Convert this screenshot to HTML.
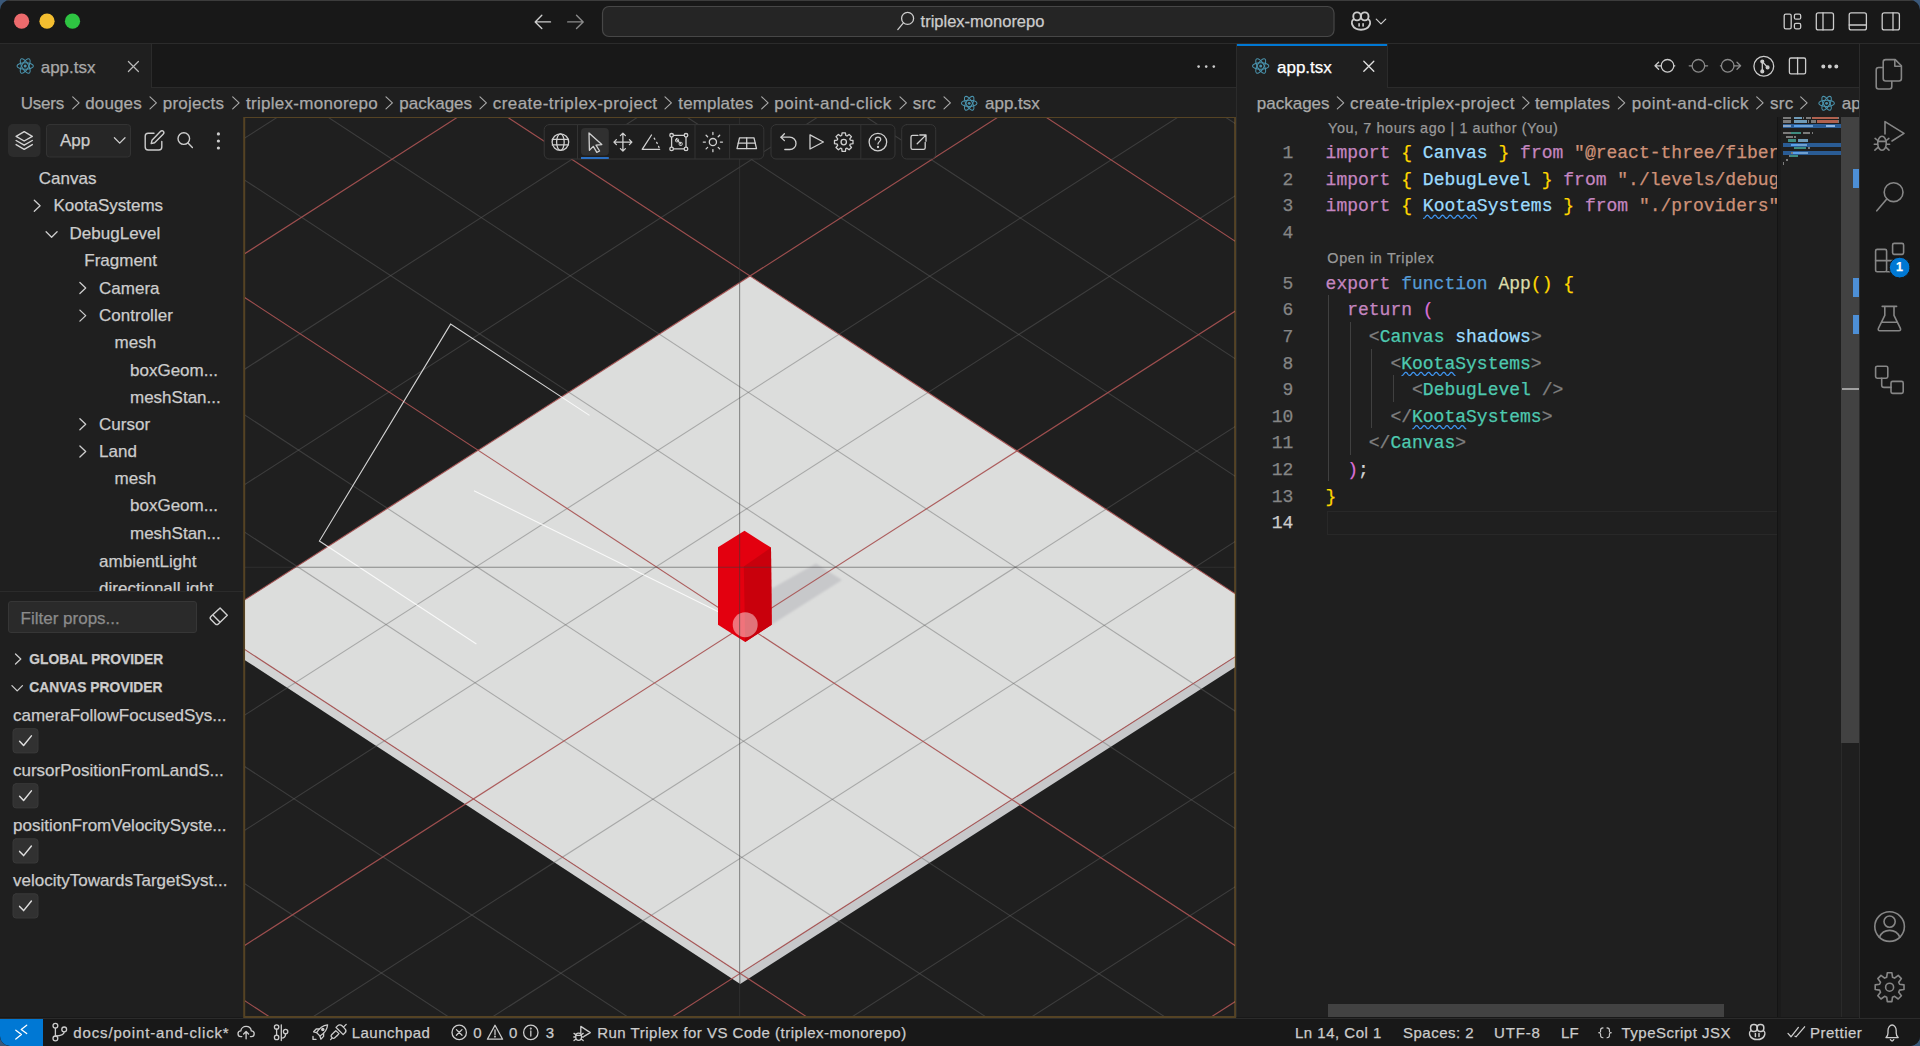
<!DOCTYPE html><html><head><meta charset="utf-8"><style>
*{box-sizing:border-box;margin:0;padding:0}
html,body{width:1920px;height:1046px;overflow:hidden;background:#3a5879}
body{font-family:"Liberation Sans",sans-serif;color:#cccccc}
.a{-webkit-text-stroke:0.25px currentColor}
#win{position:absolute;left:0;top:0;width:1920px;height:1046px;border-radius:10px;overflow:hidden;background:#181818}
.a{position:absolute;white-space:nowrap}
.t17{font-size:17px;line-height:20px}
.t16{font-size:16px;line-height:20px}
.mono{font-family:"Liberation Mono",monospace;font-size:18px;line-height:20px}
</style></head><body><div id="win"><svg width="1920" height="1046" style="position:absolute;left:0;top:0"><defs><clipPath id="vp"><rect x="245" y="118" width="990" height="898"/></clipPath><filter id="blur2" x="-20%" y="-20%" width="140%" height="140%"><feGaussianBlur stdDeviation="1.1"/></filter></defs><g clip-path="url(#vp)"><rect x="245" y="118" width="990" height="898" fill="#1f1f1f"/><polygon points="206.4,624.4 740.2,973.4 740.2,983.9 206.4,634.9" fill="#d2d3d3"/><polygon points="740.2,973.4 1283.8,625.6 1283.8,636.1 740.2,983.9" fill="#c7c8ca"/><polygon points="750.0,276.0 1283.8,625.6 740.2,973.4 206.4,624.4" fill="#dcdddc"/><polygon points="771,589 816,563.5 842,580 771,625" fill="#c7c8ca" filter="url(#blur2)"/><g stroke="rgba(100,100,100,0.43)" stroke-width="1.1"><line x1="761.5" y1="-540.7" x2="-1050.5" y2="623.0"/><line x1="761.5" y1="-540.7" x2="2540.8" y2="627.0"/><line x1="939.9" y1="-423.6" x2="-872.1" y2="739.4"/><line x1="579.8" y1="-424.0" x2="2359.1" y2="743.0"/><line x1="1029.0" y1="-365.1" x2="-783.0" y2="797.6"/><line x1="489.0" y1="-365.7" x2="2268.3" y2="801.0"/><line x1="1207.3" y1="-248.1" x2="-604.7" y2="913.9"/><line x1="307.5" y1="-249.1" x2="2086.8" y2="916.9"/><line x1="1296.3" y1="-189.7" x2="-515.7" y2="972.0"/><line x1="216.8" y1="-190.9" x2="1996.1" y2="974.8"/><line x1="1474.4" y1="-72.8" x2="-337.6" y2="1088.2"/><line x1="35.4" y1="-74.4" x2="1814.8" y2="1090.6"/><line x1="1563.4" y1="-14.4" x2="-248.6" y2="1146.3"/><line x1="-55.2" y1="-16.2" x2="1724.1" y2="1148.5"/><line x1="1741.4" y1="102.4" x2="-70.6" y2="1262.4"/><line x1="-236.4" y1="100.2" x2="1542.9" y2="1264.2"/><line x1="1830.3" y1="160.7" x2="18.3" y2="1320.4"/><line x1="-327.0" y1="158.3" x2="1452.4" y2="1322.0"/><line x1="2008.1" y1="277.4" x2="196.1" y2="1436.4"/><line x1="-508.0" y1="274.6" x2="1271.3" y2="1437.6"/><line x1="2096.9" y1="335.7" x2="284.9" y2="1494.4"/><line x1="-598.5" y1="332.7" x2="1180.8" y2="1495.4"/><line x1="2274.6" y1="452.3" x2="462.6" y2="1610.3"/><line x1="-779.4" y1="448.9" x2="999.9" y2="1610.9"/><line x1="2363.3" y1="510.5" x2="551.3" y2="1668.2"/><line x1="-869.8" y1="506.9" x2="909.5" y2="1668.6"/><line x1="2540.8" y1="627.0" x2="728.8" y2="1784.0"/><line x1="-1050.5" y1="623.0" x2="728.8" y2="1784.0"/></g><g stroke="rgba(168,82,82,0.92)" stroke-width="1.15"><line x1="850.7" y1="-482.1" x2="-961.3" y2="681.2"/><line x1="670.6" y1="-482.3" x2="2450.0" y2="685.0"/><line x1="1118.2" y1="-306.6" x2="-693.8" y2="855.7"/><line x1="398.2" y1="-307.4" x2="2177.6" y2="858.9"/><line x1="1385.4" y1="-131.2" x2="-426.6" y2="1030.1"/><line x1="126.1" y1="-132.6" x2="1905.4" y2="1032.7"/><line x1="1652.4" y1="44.0" x2="-159.6" y2="1204.3"/><line x1="-145.8" y1="42.0" x2="1633.5" y2="1206.3"/><line x1="1919.2" y1="219.1" x2="107.2" y2="1378.4"/><line x1="-417.5" y1="216.5" x2="1361.8" y2="1379.8"/><line x1="2185.8" y1="394.0" x2="373.7" y2="1552.3"/><line x1="-689.0" y1="390.8" x2="1090.4" y2="1553.1"/><line x1="2452.1" y1="568.8" x2="640.1" y2="1726.1"/><line x1="-960.2" y1="565.0" x2="819.2" y2="1726.3"/></g><g stroke="rgba(255,255,255,0.8)" stroke-width="1.1" fill="none"><polyline points="589.5,415.4 450.6,324.1 319.4,541 476.4,644"/><line x1="474" y1="490.8" x2="731.5" y2="618.3"/></g><polygon points="744.5,530.8 771,547.6 771.7,624.7 745.2,641.9 718,624.7 718,547.3" fill="#e3000f"/><polygon points="743.8,566.6 771,547.6 771.7,624.7 745.2,641.9" fill="#c9000c"/><circle cx="745.2" cy="624.7" r="12.5" fill="rgba(255,255,255,0.45)"/><line x1="739.6" y1="118" x2="739.6" y2="1016" stroke="rgba(60,60,60,0.52)" stroke-width="1.1"/><line x1="245" y1="567.3" x2="1235" y2="567.3" stroke="rgba(60,60,60,0.52)" stroke-width="1.1"/></g><rect x="244.2" y="117" width="991" height="900" fill="none" stroke="rgba(200,150,60,0.35)" stroke-width="2"/></svg><div class="a" style="left:0px;top:0px;width:1920px;height:1px;background:#3c3c3c;"></div><div class="a" style="left:0px;top:43px;width:1920px;height:1px;background:#2b2b2b;"></div><svg class="a" style="left:0;top:0;" width="1920" height="1046"><g stroke="#cccccc" stroke-width="1.4" fill="none" stroke-linecap="round" stroke-linejoin="round"><circle cx="21.6" cy="21.2" r="7.6" fill="#ec6a6c" stroke="none"/><circle cx="47" cy="21.2" r="7.6" fill="#f4be30" stroke="none"/><circle cx="72.5" cy="21.2" r="7.6" fill="#2ec442" stroke="none"/><path d="M550.5,21.9H535.5M541.8,15.2L535.2,21.9L541.8,28.6" stroke="#cccccc"/><path d="M567.7,21.9H583M576.5,15.2L583.2,21.9L576.5,28.6" stroke="#8b8b8b"/><rect x="602.5" y="6.5" width="731.5" height="30" rx="6.5" fill="#252525" stroke="#474747" stroke-width="1.2"/><circle cx="907.6" cy="18.4" r="6" stroke="#cccccc" stroke-width="1.3"/><path d="M903.4,22.8L897.8,29.6" stroke="#cccccc" stroke-width="1.3"/><g stroke="#cccccc" stroke-width="1.9" fill="none"><rect x="1353.3" y="12.4" width="7.5" height="8" rx="3.6"/><rect x="1361" y="12.4" width="7.5" height="8" rx="3.6"/><path d="M1353.5,19.5C1350.5,21 1351.3,29.8 1361,29.8C1370.7,29.8 1371.5,21 1368.5,19.5"/></g><rect x="1358.3" y="23.2" width="1.6" height="3.4" fill="#cccccc" stroke="none"/><rect x="1362.3" y="23.2" width="1.6" height="3.4" fill="#cccccc" stroke="none"/><path d="M1376.25,19.2L1381,23.95L1385.75,19.2" stroke="#cccccc" stroke-width="1.2" fill="none" stroke-linecap="round" stroke-linejoin="round"/><g stroke="#cccccc" stroke-width="1.3" fill="none"><rect x="1784.2" y="14.2" width="7" height="14.6" rx="1.6"/><rect x="1794.4" y="14.2" width="6.3" height="5" rx="1.5"/><rect x="1794.4" y="23.4" width="6.3" height="5.4" rx="1.5"/><rect x="1816.3" y="12.9" width="17.2" height="17" rx="2"/><path d="M1823,12.9V29.9"/><rect x="1849.2" y="12.9" width="17.2" height="17" rx="2"/><path d="M1849.2,25H1866.4"/><rect x="1882.2" y="12.9" width="17.2" height="17" rx="2"/><path d="M1893,12.9V29.9"/></g></g></svg><div class="a " style="left:920.6px;top:13.1px;font-size:16.5px;line-height:16.5px;color:#cccccc;">triplex-monorepo</div><div class="a" style="left:0px;top:44px;width:1236px;height:44px;background:#181818;"></div><div class="a" style="left:0px;top:87px;width:1236px;height:1px;background:#2b2b2b;"></div><div class="a" style="left:0px;top:44px;width:151px;height:44px;background:#1f1f1f;"></div><div class="a" style="left:151px;top:44px;width:1px;height:43px;background:#2b2b2b;"></div><div class="a" style="left:1236px;top:44px;width:1px;height:973px;background:#2b2b2b;"></div><svg class="a" style="left:0;top:0;" width="1920" height="1046"><g stroke="#cccccc" stroke-width="1.4" fill="none" stroke-linecap="round" stroke-linejoin="round"><g stroke="#4a93ad" stroke-width="1.05" fill="none"><ellipse cx="25.2" cy="66" rx="8.2" ry="3.3"/><ellipse cx="25.2" cy="66" rx="8.2" ry="3.3" transform="rotate(60 25.2 66)"/><ellipse cx="25.2" cy="66" rx="8.2" ry="3.3" transform="rotate(120 25.2 66)"/><circle cx="25.2" cy="66" r="1.5" fill="#4a93ad" stroke="none"/></g><path d="M128.4,61.5L138.4,71.5M138.4,61.5L128.4,71.5" stroke="#b8b8b8" stroke-width="1.2" fill="none"/><circle cx="1198.6" cy="66.6" r="1.3" fill="#cccccc" stroke="none"/><circle cx="1206.2" cy="66.6" r="1.3" fill="#cccccc" stroke="none"/><circle cx="1213.8" cy="66.6" r="1.3" fill="#cccccc" stroke="none"/></g></svg><div class="a " style="left:40.7px;top:58.5px;font-size:17px;line-height:17px;color:#a8a8a8;">app.tsx</div><div class="a" style="left:0px;top:88px;width:1236px;height:29px;background:#1f1f1f;"></div><svg class="a" style="left:0;top:0;" width="1920" height="1046"><g stroke="#cccccc" stroke-width="1.4" fill="none" stroke-linecap="round" stroke-linejoin="round"><path d="M72.7,96.8L79.10000000000001,102.8L72.7,108.8" stroke="#a9a9a9" stroke-width="1.15" fill="none" stroke-linecap="round" stroke-linejoin="round"/><path d="M150,96.8L156.4,102.8L150,108.8" stroke="#a9a9a9" stroke-width="1.15" fill="none" stroke-linecap="round" stroke-linejoin="round"/><path d="M232.7,96.8L239.1,102.8L232.7,108.8" stroke="#a9a9a9" stroke-width="1.15" fill="none" stroke-linecap="round" stroke-linejoin="round"/><path d="M386,96.8L392.4,102.8L386,108.8" stroke="#a9a9a9" stroke-width="1.15" fill="none" stroke-linecap="round" stroke-linejoin="round"/><path d="M480,96.8L486.4,102.8L480,108.8" stroke="#a9a9a9" stroke-width="1.15" fill="none" stroke-linecap="round" stroke-linejoin="round"/><path d="M665,96.8L671.4,102.8L665,108.8" stroke="#a9a9a9" stroke-width="1.15" fill="none" stroke-linecap="round" stroke-linejoin="round"/><path d="M761.7,96.8L768.1,102.8L761.7,108.8" stroke="#a9a9a9" stroke-width="1.15" fill="none" stroke-linecap="round" stroke-linejoin="round"/><path d="M900,96.8L906.4,102.8L900,108.8" stroke="#a9a9a9" stroke-width="1.15" fill="none" stroke-linecap="round" stroke-linejoin="round"/><path d="M944,96.8L950.4,102.8L944,108.8" stroke="#a9a9a9" stroke-width="1.15" fill="none" stroke-linecap="round" stroke-linejoin="round"/><g stroke="#4a93ad" stroke-width="1.05" fill="none"><ellipse cx="969.2" cy="103.3" rx="7.789999999999999" ry="3.135"/><ellipse cx="969.2" cy="103.3" rx="7.789999999999999" ry="3.135" transform="rotate(60 969.2 103.3)"/><ellipse cx="969.2" cy="103.3" rx="7.789999999999999" ry="3.135" transform="rotate(120 969.2 103.3)"/><circle cx="969.2" cy="103.3" r="1.4249999999999998" fill="#4a93ad" stroke="none"/></g></g></svg><div class="a " style="left:20.7px;top:95.1px;font-size:17px;line-height:17px;color:#a9a9a9;letter-spacing:-0.20px;">Users</div><div class="a " style="left:85.3px;top:95.1px;font-size:17px;line-height:17px;color:#a9a9a9;letter-spacing:0.12px;">douges</div><div class="a " style="left:162.7px;top:95.1px;font-size:17px;line-height:17px;color:#a9a9a9;letter-spacing:0.25px;">projects</div><div class="a " style="left:246.0px;top:95.1px;font-size:17px;line-height:17px;color:#a9a9a9;letter-spacing:0.28px;">triplex-monorepo</div><div class="a " style="left:399.3px;top:95.1px;font-size:17px;line-height:17px;color:#a9a9a9;letter-spacing:0.00px;">packages</div><div class="a " style="left:492.7px;top:95.1px;font-size:17px;line-height:17px;color:#a9a9a9;letter-spacing:0.45px;">create-triplex-project</div><div class="a " style="left:678.3px;top:95.1px;font-size:17px;line-height:17px;color:#a9a9a9;letter-spacing:0.15px;">templates</div><div class="a " style="left:774.3px;top:95.1px;font-size:17px;line-height:17px;color:#a9a9a9;letter-spacing:0.52px;">point-and-click</div><div class="a " style="left:912.7px;top:95.1px;font-size:17px;line-height:17px;color:#a9a9a9;letter-spacing:0.25px;">src</div><div class="a " style="left:985.0px;top:95.1px;font-size:17px;line-height:17px;color:#a9a9a9;letter-spacing:0.00px;">app.tsx</div><div class="a" style="left:0px;top:117px;width:243px;height:900px;background:#1f1f1f;"></div><div class="a" style="left:0px;top:591px;width:243px;height:1px;background:#2b2b2b;"></div><svg class="a" style="left:0;top:0;" width="1920" height="1046"><g stroke="#cccccc" stroke-width="1.4" fill="none" stroke-linecap="round" stroke-linejoin="round"><rect x="8" y="124" width="32.5" height="33" rx="5" fill="#2c2c2c" stroke="none"/><g stroke="#d4d4d4" stroke-width="1.4" fill="none" stroke-linejoin="round"><path d="M24.2,131.6L32.3,136.3L24.2,141L16.1,136.3Z"/><path d="M16.1,140.5L24.2,145.2L32.3,140.5"/><path d="M16.1,144.6L24.2,149.3L32.3,144.6"/></g><rect x="46.5" y="124.5" width="84" height="32.5" rx="3" fill="#262626" stroke="#333333" stroke-width="1"/><path d="M114.4,137.8L119.7,143.10000000000002L125.0,137.8" stroke="#cccccc" stroke-width="1.3" fill="none" stroke-linecap="round" stroke-linejoin="round"/><g stroke="#cccccc" stroke-width="1.4" fill="none" stroke-linecap="round" stroke-linejoin="round"><path d="M154,133.2H148.2C146.4,133.2 145.2,134.4 145.2,136.2V147C145.2,148.8 146.4,150 148.2,150H158.8C160.6,150 161.8,148.8 161.8,147V141.5"/><path d="M160.4,131.4C161.3,130.5 162.7,130.5 163.3,131.3C164,132 164,133.3 163.1,134.2L154.6,142.7L151.2,143.6L152,140.2Z"/><circle cx="183.8" cy="138.6" r="5.8"/><path d="M188,143L192.4,147.6"/></g><circle cx="218.4" cy="133.9" r="1.6" fill="#cccccc" stroke="none"/><circle cx="218.4" cy="141.0" r="1.6" fill="#cccccc" stroke="none"/><circle cx="218.4" cy="148.0" r="1.6" fill="#cccccc" stroke="none"/><path d="M34.3,200.2L40.099999999999994,205.7L34.3,211.2" stroke="#cccccc" stroke-width="1.3" fill="none" stroke-linecap="round" stroke-linejoin="round"/><path d="M46.099999999999994,231.7L51.599999999999994,237.2L57.099999999999994,231.7" stroke="#cccccc" stroke-width="1.3" fill="none" stroke-linecap="round" stroke-linejoin="round"/><path d="M79.89999999999999,282.5L85.69999999999999,288L79.89999999999999,293.5" stroke="#cccccc" stroke-width="1.3" fill="none" stroke-linecap="round" stroke-linejoin="round"/><path d="M79.89999999999999,310.1L85.69999999999999,315.6L79.89999999999999,321.1" stroke="#cccccc" stroke-width="1.3" fill="none" stroke-linecap="round" stroke-linejoin="round"/><path d="M79.89999999999999,418.8L85.69999999999999,424.3L79.89999999999999,429.8" stroke="#cccccc" stroke-width="1.3" fill="none" stroke-linecap="round" stroke-linejoin="round"/><path d="M79.89999999999999,446.0L85.69999999999999,451.5L79.89999999999999,457.0" stroke="#cccccc" stroke-width="1.3" fill="none" stroke-linecap="round" stroke-linejoin="round"/><g stroke="#d0d0d0" stroke-width="1.4" fill="none" stroke-linejoin="round"><path d="M220.1,607.9L227.3,615.2L218.3,623.9C217.5,624.7 216.2,624.7 215.4,623.9L210.9,619.5C210.1,618.7 210.1,617.4 210.9,616.6Z"/><path d="M213.4,615.6L219.6,621.8"/></g><path d="M15.5,654.0L20.8,659L15.5,664.0" stroke="#cccccc" stroke-width="1.3" fill="none" stroke-linecap="round" stroke-linejoin="round"/><path d="M11.95,685.6L17.2,690.85L22.45,685.6" stroke="#cccccc" stroke-width="1.3" fill="none" stroke-linecap="round" stroke-linejoin="round"/><rect x="13" y="728.7" width="25" height="24.2" rx="3" fill="#313131" stroke="#393939" stroke-width="1"/><path d="M19.6,741.3000000000001L23.6,745.5L31.4,735.9000000000001" stroke="#dddddd" stroke-width="1.5" fill="none"/><rect x="13" y="783.7" width="25" height="24.2" rx="3" fill="#313131" stroke="#393939" stroke-width="1"/><path d="M19.6,796.3000000000001L23.6,800.5L31.4,790.9000000000001" stroke="#dddddd" stroke-width="1.5" fill="none"/><rect x="13" y="838.8" width="25" height="24.2" rx="3" fill="#313131" stroke="#393939" stroke-width="1"/><path d="M19.6,851.4L23.6,855.5999999999999L31.4,846.0" stroke="#dddddd" stroke-width="1.5" fill="none"/><rect x="13" y="893.8" width="25" height="24.2" rx="3" fill="#313131" stroke="#393939" stroke-width="1"/><path d="M19.6,906.4L23.6,910.5999999999999L31.4,901.0" stroke="#dddddd" stroke-width="1.5" fill="none"/></g></svg><div class="a " style="left:60.0px;top:132.4px;font-size:17px;line-height:17px;color:#cccccc;">App</div><div class="a" style="left:0;top:160px;width:243px;height:431px;overflow:hidden"><div class="a" style="left:0;top:-160px;width:243px;height:1046px"><div class="a " style="left:38.8px;top:169.9px;font-size:17px;line-height:17px;color:#cccccc;">Canvas</div><div class="a " style="left:53.5px;top:197.3px;font-size:17px;line-height:17px;color:#cccccc;">KootaSystems</div><div class="a " style="left:69.6px;top:224.6px;font-size:17px;line-height:17px;color:#cccccc;">DebugLevel</div><div class="a " style="left:84.3px;top:252.4px;font-size:17px;line-height:17px;color:#cccccc;">Fragment</div><div class="a " style="left:99.1px;top:279.6px;font-size:17px;line-height:17px;color:#cccccc;">Camera</div><div class="a " style="left:99.1px;top:307.2px;font-size:17px;line-height:17px;color:#cccccc;">Controller</div><div class="a " style="left:114.6px;top:334.3px;font-size:17px;line-height:17px;color:#cccccc;">mesh</div><div class="a " style="left:130.0px;top:361.6px;font-size:17px;line-height:17px;color:#cccccc;">boxGeom...</div><div class="a " style="left:130.0px;top:389.1px;font-size:17px;line-height:17px;color:#cccccc;">meshStan...</div><div class="a " style="left:99.1px;top:415.9px;font-size:17px;line-height:17px;color:#cccccc;">Cursor</div><div class="a " style="left:99.1px;top:443.1px;font-size:17px;line-height:17px;color:#cccccc;">Land</div><div class="a " style="left:114.6px;top:470.3px;font-size:17px;line-height:17px;color:#cccccc;">mesh</div><div class="a " style="left:130.0px;top:497.4px;font-size:17px;line-height:17px;color:#cccccc;">boxGeom...</div><div class="a " style="left:130.0px;top:525.0px;font-size:17px;line-height:17px;color:#cccccc;">meshStan...</div><div class="a " style="left:99.1px;top:552.5px;font-size:17px;line-height:17px;color:#cccccc;">ambientLight</div><div class="a " style="left:99.1px;top:579.8px;font-size:17px;line-height:17px;color:#cccccc;">directionalLight</div></div></div><div class="a" style="left:7.6px;top:600.6px;width:189.2px;height:32.7px;background:#2a2a2a;border:1px solid #363636;border-radius:3px"></div><div class="a " style="left:20.6px;top:609.6px;font-size:17px;line-height:17px;color:#8b8b8b;">Filter props...</div><div class="a " style="left:29.3px;top:652.6px;font-size:13.8px;line-height:13.8px;color:#cccccc;font-weight:bold;">GLOBAL PROVIDER</div><div class="a " style="left:29.3px;top:681.2px;font-size:13.8px;line-height:13.8px;color:#cccccc;font-weight:bold;">CANVAS PROVIDER</div><div class="a " style="left:13.0px;top:706.6px;font-size:17px;line-height:17px;color:#cccccc;">cameraFollowFocusedSys...</div><div class="a " style="left:13.0px;top:761.7px;font-size:17px;line-height:17px;color:#cccccc;">cursorPositionFromLandS...</div><div class="a " style="left:13.0px;top:816.8px;font-size:17px;line-height:17px;color:#cccccc;">positionFromVelocitySyste...</div><div class="a " style="left:13.0px;top:871.9px;font-size:17px;line-height:17px;color:#cccccc;">velocityTowardsTargetSyst...</div><svg class="a" style="left:0;top:0;" width="1920" height="1046"><g stroke="#cccccc" stroke-width="1.4" fill="none" stroke-linecap="round" stroke-linejoin="round"><g fill="#1e1e1e" stroke="#363636" stroke-width="1"><rect x="544.2" y="124.6" width="219.6" height="34.4" rx="5"/><rect x="771" y="124.6" width="124" height="34.4" rx="5"/><rect x="901.7" y="124.6" width="34" height="34.4" rx="5"/></g><g stroke="#333333" stroke-width="1"><path d="M577.5,125V158.6M695,125V158.6M729.6,125V158.6M860.8,125V158.6"/></g><rect x="581" y="128" width="27.8" height="27.6" rx="4" fill="#303030" stroke="none"/><rect x="581" y="157" width="27.8" height="2" fill="#2b6fc2" stroke="none"/><g stroke="#d0d0d0" stroke-width="1.3" fill="none" stroke-linecap="round" stroke-linejoin="round"><circle cx="560.4" cy="142.1" r="8.3"/><ellipse cx="560.4" cy="142.1" rx="3.8" ry="8.3"/><path d="M552.3,139.3H568.5M552.3,144.9H568.5"/><path d="M589,132.9L601.8,144.6L596,145.2L599.6,151L596.8,152.3L593.3,146.4L589.4,150.2Z"/><path d="M622.9,133.1V151.1M613.9,142.1H631.9M620.4,135.6L622.9,133.1L625.4,135.6M620.4,148.6L622.9,151.1L625.4,148.6M616.4,139.6L613.9,142.1L616.4,144.6M629.4,139.6L631.9,142.1L629.4,144.6"/><path d="M651.5,135L642.2,149.3H659.7"/><path d="M654.2,138.2L655.6,140.5M656.7,142.4L657.8,144.6M658.6,146.4L659.2,148" stroke-dasharray="1.2 1.8"/><rect x="671.6" y="135.3" width="14.4" height="13.6"/><circle cx="671.6" cy="135.3" r="1.8" fill="#1e1e1e"/><circle cx="686" cy="135.3" r="1.8" fill="#1e1e1e"/><circle cx="671.6" cy="148.9" r="1.8" fill="#1e1e1e"/><circle cx="686" cy="148.9" r="1.8" fill="#1e1e1e"/><path d="M676.5,139.5L680.8,143.8" stroke-width="1.1"/><rect x="675.6" y="138.8" width="3" height="3" rx="0.8" stroke-width="1"/><rect x="679.2" y="142.4" width="3" height="3" rx="0.8" stroke-width="1"/><circle cx="712.9" cy="142.1" r="3.6"/><path d="M712.9,132.5V134.6M712.9,149.6V151.7M703.3,142.1H705.4M720.4,142.1H722.5M706.1,135.3L707.6,136.8M718.2,147.4L719.7,148.9M706.1,148.9L707.6,147.4M718.2,136.8L719.7,135.3"/><path d="M739.5,137.8H754L756.5,148.6H737Z"/><path d="M746.7,137.8V148.6M738.2,143.2H755.3"/></g><g stroke="#d0d0d0" stroke-width="1.3" fill="none" stroke-linecap="round" stroke-linejoin="round"><path d="M781,137.2H789.8C793.3,137.2 796,140 796,143.4C796,146.8 793.3,149.5 789.8,149.5H784.8"/><path d="M784.4,133.8L781,137.2L784.4,140.6"/><path d="M810,134.9V149L823.4,142Z"/><polygon points="850.3,140.1 853.0,140.5 853.0,143.7 850.3,144.1 849.8,145.3 851.5,147.5 849.1,149.8 847.0,148.2 845.8,148.7 845.4,151.4 842.1,151.4 841.7,148.7 840.5,148.2 838.4,149.8 836.0,147.5 837.7,145.3 837.2,144.1 834.5,143.7 834.5,140.5 837.2,140.1 837.7,138.9 836.0,136.7 838.4,134.4 840.5,136.0 841.7,135.5 842.1,132.8 845.4,132.8 845.8,135.5 847.0,136.0 849.1,134.4 851.5,136.7 849.8,138.9"/><circle cx="843.75" cy="142.1" r="2.7"/><circle cx="877.9" cy="142.1" r="8.8"/><path d="M875.3,139.8C875.3,138.2 876.5,137.1 878,137.1C879.5,137.1 880.7,138.2 880.7,139.6C880.7,141.6 878,141.7 878,144.1"/><circle cx="878" cy="147" r="0.5" fill="#d0d0d0"/><path d="M918,135.3H912.6C911.6,135.3 911,135.9 911,136.9V147.8C911,148.8 911.6,149.4 912.6,149.4H923.6C924.6,149.4 925.2,148.8 925.2,147.8V142.4"/><path d="M919.8,135H926V141.2M925.6,135.4L917.2,143.8"/></g></g></svg><div class="a" style="left:1237px;top:44px;width:622px;height:44px;background:#181818;"></div><div class="a" style="left:1237px;top:87px;width:622px;height:1px;background:#2b2b2b;"></div><div class="a" style="left:1237px;top:44px;width:150px;height:44px;background:#1f1f1f;"></div><div class="a" style="left:1237px;top:44px;width:150px;height:2px;background:#0078d4;"></div><div class="a" style="left:1387px;top:44px;width:1px;height:43px;background:#2b2b2b;"></div><div class="a" style="left:1237px;top:88px;width:622px;height:929px;background:#1f1f1f;"></div><svg class="a" style="left:0;top:0;" width="1920" height="1046"><g stroke="#cccccc" stroke-width="1.4" fill="none" stroke-linecap="round" stroke-linejoin="round"><g stroke="#4a93ad" stroke-width="1.05" fill="none"><ellipse cx="1260.7" cy="66" rx="8.2" ry="3.3"/><ellipse cx="1260.7" cy="66" rx="8.2" ry="3.3" transform="rotate(60 1260.7 66)"/><ellipse cx="1260.7" cy="66" rx="8.2" ry="3.3" transform="rotate(120 1260.7 66)"/><circle cx="1260.7" cy="66" r="1.5" fill="#4a93ad" stroke="none"/></g><path d="M1363.8,61.3L1373.8,71.3M1373.8,61.3L1363.8,71.3" stroke="#e0e0e0" stroke-width="1.3" fill="none"/><g stroke="#cccccc" stroke-width="1.3" fill="none" stroke-linecap="round" stroke-linejoin="round"><circle cx="1667.5" cy="65.8" r="6.3"/><path d="M1661.2,65.8H1655M1658.6,62.3L1655,65.8L1658.6,69.3M1673.8,65.8H1674.8"/></g><g stroke="#8a8a8a" stroke-width="1.3" fill="none" stroke-linecap="round" stroke-linejoin="round"><circle cx="1698.4" cy="65.8" r="6.3"/><path d="M1689.2,65.8H1692.1M1704.7,65.8H1707.6"/><circle cx="1727.7" cy="65.8" r="6.3"/><path d="M1734,65.8H1740.6M1737,62.3L1740.6,65.8L1737,69.3M1720.4,65.8H1721.4"/></g><g stroke="#cccccc" stroke-width="1.3" fill="none" stroke-linecap="round" stroke-linejoin="round"><circle cx="1763.8" cy="66.3" r="9.9"/><path d="M1762.3,61.5V71.4M1762.3,61.5L1766.8,66.6"/><circle cx="1762.3" cy="61.5" r="1.4" fill="#cccccc"/><circle cx="1762.3" cy="71.4" r="1.4" fill="#cccccc"/><circle cx="1767.6" cy="67.4" r="1.4" fill="#cccccc"/><rect x="1789.4" y="58" width="16.2" height="15.8" rx="1.6"/><path d="M1797.6,58V73.8"/></g><circle cx="1823.3" cy="66.4" r="1.3" fill="#cccccc"/><circle cx="1829.8" cy="66.4" r="1.3" fill="#cccccc"/><circle cx="1836.3" cy="66.4" r="1.3" fill="#cccccc"/><path d="M1337.3,96.8L1343.7,102.8L1337.3,108.8" stroke="#a9a9a9" stroke-width="1.15" fill="none" stroke-linecap="round" stroke-linejoin="round"/><path d="M1522.7,96.8L1529.1000000000001,102.8L1522.7,108.8" stroke="#a9a9a9" stroke-width="1.15" fill="none" stroke-linecap="round" stroke-linejoin="round"/><path d="M1618.3,96.8L1624.7,102.8L1618.3,108.8" stroke="#a9a9a9" stroke-width="1.15" fill="none" stroke-linecap="round" stroke-linejoin="round"/><path d="M1756.7,96.8L1763.1000000000001,102.8L1756.7,108.8" stroke="#a9a9a9" stroke-width="1.15" fill="none" stroke-linecap="round" stroke-linejoin="round"/><path d="M1800.7,96.8L1807.1000000000001,102.8L1800.7,108.8" stroke="#a9a9a9" stroke-width="1.15" fill="none" stroke-linecap="round" stroke-linejoin="round"/><g stroke="#4a93ad" stroke-width="1.05" fill="none"><ellipse cx="1826.6" cy="103.3" rx="7.789999999999999" ry="3.135"/><ellipse cx="1826.6" cy="103.3" rx="7.789999999999999" ry="3.135" transform="rotate(60 1826.6 103.3)"/><ellipse cx="1826.6" cy="103.3" rx="7.789999999999999" ry="3.135" transform="rotate(120 1826.6 103.3)"/><circle cx="1826.6" cy="103.3" r="1.4249999999999998" fill="#4a93ad" stroke="none"/></g></g></svg><div class="a " style="left:1277.0px;top:58.5px;font-size:17px;line-height:17px;color:#ffffff;">app.tsx</div><div class="a" style="left:1237px;top:88px;width:622px;height:29px;overflow:hidden"><div class="a" style="left:-1237px;top:-88px;width:1920px;height:200px"><div class="a " style="left:1256.8px;top:95.1px;font-size:17px;line-height:17px;color:#a9a9a9;letter-spacing:0.00px;">packages</div><div class="a " style="left:1350.0px;top:95.1px;font-size:17px;line-height:17px;color:#a9a9a9;letter-spacing:0.45px;">create-triplex-project</div><div class="a " style="left:1535.0px;top:95.1px;font-size:17px;line-height:17px;color:#a9a9a9;letter-spacing:0.15px;">templates</div><div class="a " style="left:1631.7px;top:95.1px;font-size:17px;line-height:17px;color:#a9a9a9;letter-spacing:0.52px;">point-and-click</div><div class="a " style="left:1770.0px;top:95.1px;font-size:17px;line-height:17px;color:#a9a9a9;letter-spacing:0.25px;">src</div><div class="a " style="left:1841.7px;top:95.1px;font-size:17px;line-height:17px;color:#a9a9a9;">app.tsx</div></div></div><div class="a" style="left:1326.5px;top:510.5px;width:451px;height:24px;border:1.5px solid #282828;border-right:none"></div><div class="a" style="left:1327.8px;top:295px;width:1px;height:186.39999999999998px;background:#404040;"></div><div class="a" style="left:1349.8px;top:322px;width:1px;height:132.8px;background:#404040;"></div><div class="a" style="left:1371.3px;top:348.6px;width:1px;height:79.59999999999997px;background:#404040;"></div><div class="a" style="left:1392.6px;top:375.2px;width:1px;height:26.400000000000034px;background:#404040;"></div><div class="a" style="left:1237px;top:117px;width:540px;height:900px;overflow:hidden"><div class="a" style="left:-1237px;top:-117px;width:1920px;height:1046px"><div class="a" style="left:1325.6px;top:144.2px;font-family:'Liberation Mono',monospace;font-size:18px;line-height:18px;color:#D4D4D4;white-space:pre;"><span style="color:#C586C0">import</span><span style="color:#D4D4D4"> </span><span style="color:#FFD700">{</span><span style="color:#9CDCFE"> Canvas </span><span style="color:#FFD700">}</span><span style="color:#D4D4D4"> </span><span style="color:#C586C0">from</span><span style="color:#D4D4D4"> </span><span style="color:#CE9178">"@react-three/fiber";</span></div><div class="a" style="left:1325.6px;top:170.8px;font-family:'Liberation Mono',monospace;font-size:18px;line-height:18px;color:#D4D4D4;white-space:pre;"><span style="color:#C586C0">import</span><span style="color:#D4D4D4"> </span><span style="color:#FFD700">{</span><span style="color:#9CDCFE"> DebugLevel </span><span style="color:#FFD700">}</span><span style="color:#D4D4D4"> </span><span style="color:#C586C0">from</span><span style="color:#D4D4D4"> </span><span style="color:#CE9178">"./levels/debug-level";</span></div><div class="a" style="left:1325.6px;top:197.4px;font-family:'Liberation Mono',monospace;font-size:18px;line-height:18px;color:#D4D4D4;white-space:pre;"><span style="color:#C586C0">import</span><span style="color:#D4D4D4"> </span><span style="color:#FFD700">{</span><span style="color:#9CDCFE"> KootaSystems </span><span style="color:#FFD700">}</span><span style="color:#D4D4D4"> </span><span style="color:#C586C0">from</span><span style="color:#D4D4D4"> </span><span style="color:#CE9178">"./providers";</span></div><div class="a" style="left:1325.6px;top:274.6px;font-family:'Liberation Mono',monospace;font-size:18px;line-height:18px;color:#D4D4D4;white-space:pre;"><span style="color:#C586C0">export</span><span style="color:#D4D4D4"> </span><span style="color:#569CD6">function</span><span style="color:#D4D4D4"> </span><span style="color:#DCDCAA">App</span><span style="color:#FFD700">()</span><span style="color:#D4D4D4"> </span><span style="color:#FFD700">{</span></div><div class="a" style="left:1325.6px;top:301.2px;font-family:'Liberation Mono',monospace;font-size:18px;line-height:18px;color:#D4D4D4;white-space:pre;"><span style="color:#D4D4D4">  </span><span style="color:#C586C0">return</span><span style="color:#D4D4D4"> </span><span style="color:#DA70D6">(</span></div><div class="a" style="left:1325.6px;top:327.9px;font-family:'Liberation Mono',monospace;font-size:18px;line-height:18px;color:#D4D4D4;white-space:pre;"><span style="color:#D4D4D4">    </span><span style="color:#808080">&lt;</span><span style="color:#4EC9B0">Canvas</span><span style="color:#D4D4D4"> </span><span style="color:#9CDCFE">shadows</span><span style="color:#808080">&gt;</span></div><div class="a" style="left:1325.6px;top:354.5px;font-family:'Liberation Mono',monospace;font-size:18px;line-height:18px;color:#D4D4D4;white-space:pre;"><span style="color:#D4D4D4">      </span><span style="color:#808080">&lt;</span><span style="color:#4EC9B0">KootaSystems</span><span style="color:#808080">&gt;</span></div><div class="a" style="left:1325.6px;top:381.1px;font-family:'Liberation Mono',monospace;font-size:18px;line-height:18px;color:#D4D4D4;white-space:pre;"><span style="color:#D4D4D4">        </span><span style="color:#808080">&lt;</span><span style="color:#4EC9B0">DebugLevel</span><span style="color:#D4D4D4"> </span><span style="color:#808080">/&gt;</span></div><div class="a" style="left:1325.6px;top:407.8px;font-family:'Liberation Mono',monospace;font-size:18px;line-height:18px;color:#D4D4D4;white-space:pre;"><span style="color:#D4D4D4">      </span><span style="color:#808080">&lt;/</span><span style="color:#4EC9B0">KootaSystems</span><span style="color:#808080">&gt;</span></div><div class="a" style="left:1325.6px;top:434.4px;font-family:'Liberation Mono',monospace;font-size:18px;line-height:18px;color:#D4D4D4;white-space:pre;"><span style="color:#D4D4D4">    </span><span style="color:#808080">&lt;/</span><span style="color:#4EC9B0">Canvas</span><span style="color:#808080">&gt;</span></div><div class="a" style="left:1325.6px;top:461.0px;font-family:'Liberation Mono',monospace;font-size:18px;line-height:18px;color:#D4D4D4;white-space:pre;"><span style="color:#D4D4D4">  </span><span style="color:#DA70D6">)</span><span style="color:#D4D4D4">;</span></div><div class="a" style="left:1325.6px;top:487.6px;font-family:'Liberation Mono',monospace;font-size:18px;line-height:18px;color:#D4D4D4;white-space:pre;"><span style="color:#FFD700">}</span></div></div></div><div class="a" style="left:1282.6px;top:144.2px;font-family:'Liberation Mono',monospace;font-size:18px;line-height:18px;color:#858585;">1</div><div class="a" style="left:1282.6px;top:170.8px;font-family:'Liberation Mono',monospace;font-size:18px;line-height:18px;color:#858585;">2</div><div class="a" style="left:1282.6px;top:197.4px;font-family:'Liberation Mono',monospace;font-size:18px;line-height:18px;color:#858585;">3</div><div class="a" style="left:1282.6px;top:224.0px;font-family:'Liberation Mono',monospace;font-size:18px;line-height:18px;color:#858585;">4</div><div class="a" style="left:1282.6px;top:274.6px;font-family:'Liberation Mono',monospace;font-size:18px;line-height:18px;color:#858585;">5</div><div class="a" style="left:1282.6px;top:301.2px;font-family:'Liberation Mono',monospace;font-size:18px;line-height:18px;color:#858585;">6</div><div class="a" style="left:1282.6px;top:327.9px;font-family:'Liberation Mono',monospace;font-size:18px;line-height:18px;color:#858585;">7</div><div class="a" style="left:1282.6px;top:354.5px;font-family:'Liberation Mono',monospace;font-size:18px;line-height:18px;color:#858585;">8</div><div class="a" style="left:1282.6px;top:381.1px;font-family:'Liberation Mono',monospace;font-size:18px;line-height:18px;color:#858585;">9</div><div class="a" style="left:1271.8px;top:407.8px;font-family:'Liberation Mono',monospace;font-size:18px;line-height:18px;color:#858585;">10</div><div class="a" style="left:1271.8px;top:434.4px;font-family:'Liberation Mono',monospace;font-size:18px;line-height:18px;color:#858585;">11</div><div class="a" style="left:1271.8px;top:461.0px;font-family:'Liberation Mono',monospace;font-size:18px;line-height:18px;color:#858585;">12</div><div class="a" style="left:1271.8px;top:487.6px;font-family:'Liberation Mono',monospace;font-size:18px;line-height:18px;color:#858585;">13</div><div class="a" style="left:1271.8px;top:514.3px;font-family:'Liberation Mono',monospace;font-size:18px;line-height:18px;color:#cccccc;">14</div><svg class="a" style="left:0;top:0;" width="1920" height="1046"><g stroke="#cccccc" stroke-width="1.4" fill="none" stroke-linecap="round" stroke-linejoin="round"><polyline points="1423.60,218.40 1424.10,218.27 1424.60,217.88 1425.10,217.32 1425.60,216.67 1426.10,216.04 1426.60,215.54 1427.10,215.25 1427.60,215.22 1428.10,215.46 1428.60,215.92 1429.10,216.54 1429.60,217.19 1430.10,217.78 1430.60,218.21 1431.10,218.39 1431.60,218.31 1432.10,217.98 1432.60,217.44 1433.10,216.80 1433.60,216.16 1434.10,215.62 1434.60,215.29 1435.10,215.21 1435.60,215.39 1436.10,215.82 1436.60,216.41 1437.10,217.06 1437.60,217.68 1438.10,218.14 1438.60,218.38 1439.10,218.35 1439.60,218.06 1440.10,217.56 1440.60,216.93 1441.10,216.28 1441.60,215.72 1442.10,215.33 1442.60,215.20 1443.10,215.33 1443.60,215.72 1444.10,216.28 1444.60,216.93 1445.10,217.56 1445.60,218.06 1446.10,218.35 1446.60,218.38 1447.10,218.14 1447.60,217.68 1448.10,217.06 1448.60,216.41 1449.10,215.82 1449.60,215.39 1450.10,215.21 1450.60,215.29 1451.10,215.62 1451.60,216.16 1452.10,216.80 1452.60,217.44 1453.10,217.98 1453.60,218.31 1454.10,218.39 1454.60,218.21 1455.10,217.78 1455.60,217.19 1456.10,216.54 1456.60,215.92 1457.10,215.46 1457.60,215.22 1458.10,215.25 1458.60,215.54 1459.10,216.04 1459.60,216.67 1460.10,217.32 1460.60,217.88 1461.10,218.27 1461.60,218.40 1462.10,218.27 1462.60,217.88 1463.10,217.32 1463.60,216.67 1464.10,216.04 1464.60,215.54 1465.10,215.25 1465.60,215.22 1466.10,215.46 1466.60,215.92 1467.10,216.54 1467.60,217.19 1468.10,217.78 1468.60,218.21 1469.10,218.39 1469.60,218.31 1470.10,217.98 1470.60,217.44 1471.10,216.80 1471.60,216.16 1472.10,215.62 1472.60,215.29 1473.10,215.21 1473.60,215.39 1474.10,215.82 1474.60,216.41 1475.10,217.06 1475.60,217.68 1476.10,218.14 1476.60,218.38" stroke="#3f95f0" stroke-width="1.25" fill="none"/><polyline points="1402.00,375.49 1402.50,375.36 1403.00,374.97 1403.50,374.41 1404.00,373.76 1404.50,373.13 1405.00,372.63 1405.50,372.34 1406.00,372.31 1406.50,372.55 1407.00,373.01 1407.50,373.63 1408.00,374.28 1408.50,374.87 1409.00,375.30 1409.50,375.48 1410.00,375.40 1410.50,375.07 1411.00,374.53 1411.50,373.89 1412.00,373.25 1412.50,372.71 1413.00,372.38 1413.50,372.30 1414.00,372.48 1414.50,372.91 1415.00,373.50 1415.50,374.15 1416.00,374.77 1416.50,375.23 1417.00,375.47 1417.50,375.44 1418.00,375.15 1418.50,374.65 1419.00,374.02 1419.50,373.37 1420.00,372.81 1420.50,372.42 1421.00,372.29 1421.50,372.42 1422.00,372.81 1422.50,373.37 1423.00,374.02 1423.50,374.65 1424.00,375.15 1424.50,375.44 1425.00,375.47 1425.50,375.23 1426.00,374.77 1426.50,374.15 1427.00,373.50 1427.50,372.91 1428.00,372.48 1428.50,372.30 1429.00,372.38 1429.50,372.71 1430.00,373.25 1430.50,373.89 1431.00,374.53 1431.50,375.07 1432.00,375.40 1432.50,375.48 1433.00,375.30 1433.50,374.87 1434.00,374.28 1434.50,373.63 1435.00,373.01 1435.50,372.55 1436.00,372.31 1436.50,372.34 1437.00,372.63 1437.50,373.13 1438.00,373.76 1438.50,374.41 1439.00,374.97 1439.50,375.36 1440.00,375.49 1440.50,375.36 1441.00,374.97 1441.50,374.41 1442.00,373.76 1442.50,373.13 1443.00,372.63 1443.50,372.34 1444.00,372.31 1444.50,372.55 1445.00,373.01 1445.50,373.63 1446.00,374.28 1446.50,374.87 1447.00,375.30 1447.50,375.48 1448.00,375.40 1448.50,375.07 1449.00,374.53 1449.50,373.89 1450.00,373.25 1450.50,372.71 1451.00,372.38 1451.50,372.30 1452.00,372.48 1452.50,372.91 1453.00,373.50 1453.50,374.15 1454.00,374.77 1454.50,375.23 1455.00,375.47" stroke="#3f95f0" stroke-width="1.25" fill="none"/><polyline points="1412.80,428.75 1413.30,428.62 1413.80,428.23 1414.30,427.67 1414.80,427.02 1415.30,426.39 1415.80,425.89 1416.30,425.60 1416.80,425.57 1417.30,425.81 1417.80,426.27 1418.30,426.89 1418.80,427.54 1419.30,428.13 1419.80,428.56 1420.30,428.74 1420.80,428.66 1421.30,428.33 1421.80,427.79 1422.30,427.15 1422.80,426.51 1423.30,425.97 1423.80,425.64 1424.30,425.56 1424.80,425.74 1425.30,426.17 1425.80,426.76 1426.30,427.41 1426.80,428.03 1427.30,428.49 1427.80,428.73 1428.30,428.70 1428.80,428.41 1429.30,427.91 1429.80,427.28 1430.30,426.63 1430.80,426.07 1431.30,425.68 1431.80,425.55 1432.30,425.68 1432.80,426.07 1433.30,426.63 1433.80,427.28 1434.30,427.91 1434.80,428.41 1435.30,428.70 1435.80,428.73 1436.30,428.49 1436.80,428.03 1437.30,427.41 1437.80,426.76 1438.30,426.17 1438.80,425.74 1439.30,425.56 1439.80,425.64 1440.30,425.97 1440.80,426.51 1441.30,427.15 1441.80,427.79 1442.30,428.33 1442.80,428.66 1443.30,428.74 1443.80,428.56 1444.30,428.13 1444.80,427.54 1445.30,426.89 1445.80,426.27 1446.30,425.81 1446.80,425.57 1447.30,425.60 1447.80,425.89 1448.30,426.39 1448.80,427.02 1449.30,427.67 1449.80,428.23 1450.30,428.62 1450.80,428.75 1451.30,428.62 1451.80,428.23 1452.30,427.67 1452.80,427.02 1453.30,426.39 1453.80,425.89 1454.30,425.60 1454.80,425.57 1455.30,425.81 1455.80,426.27 1456.30,426.89 1456.80,427.54 1457.30,428.13 1457.80,428.56 1458.30,428.74 1458.80,428.66 1459.30,428.33 1459.80,427.79 1460.30,427.15 1460.80,426.51 1461.30,425.97 1461.80,425.64 1462.30,425.56 1462.80,425.74 1463.30,426.17 1463.80,426.76 1464.30,427.41 1464.80,428.03 1465.30,428.49 1465.80,428.73" stroke="#3f95f0" stroke-width="1.25" fill="none"/></g></svg><div class="a " style="left:1328.0px;top:121.4px;font-size:14.4px;line-height:14.4px;color:#999999;letter-spacing:0.6px;">You, 7 hours ago | 1 author (You)</div><div class="a " style="left:1327.3px;top:250.5px;font-size:14.4px;line-height:14.4px;color:#999999;letter-spacing:0.68px;">Open in Triplex</div><div class="a" style="left:1777px;top:117px;width:1px;height:900px;background:#141414;"></div><div class="a" style="left:1778px;top:117px;width:3px;height:900px;background:rgba(0,0,0,0.12);"></div><div class="a" style="left:1783px;top:124.2px;width:58px;height:3.9px;background:#2a5c95;"></div><div class="a" style="left:1783px;top:143.1px;width:58px;height:3.9px;background:#2a5c95;"></div><div class="a" style="left:1783px;top:150.9px;width:58px;height:3.8px;background:#2a5c95;"></div><div class="a" style="left:1783px;top:116.7px;width:7.5px;height:2.4px;background:#7b7b7b"></div><div class="a" style="left:1789.4px;top:116.7px;width:1px;height:2.4px;background:#7b7b7b"></div><div class="a" style="left:1794px;top:116.7px;width:7.8px;height:2.4px;background:#6f9bb8"></div><div class="a" style="left:1803px;top:116.7px;width:1px;height:2.4px;background:#7b7b7b"></div><div class="a" style="left:1806px;top:116.7px;width:5px;height:2.4px;background:#7b7b7b"></div><div class="a" style="left:1812px;top:116.7px;width:25.5px;height:2.4px;background:#b0614f"></div><div class="a" style="left:1837.8px;top:116.7px;width:1.5px;height:2.4px;background:#7b7b7b"></div><div class="a" style="left:1783px;top:120.39999999999999px;width:7.5px;height:2.4px;background:#7b7b7b"></div><div class="a" style="left:1789.4px;top:120.39999999999999px;width:1px;height:2.4px;background:#7b7b7b"></div><div class="a" style="left:1794px;top:120.39999999999999px;width:12.5px;height:2.4px;background:#6f9bb8"></div><div class="a" style="left:1808px;top:120.39999999999999px;width:1px;height:2.4px;background:#7b7b7b"></div><div class="a" style="left:1811px;top:120.39999999999999px;width:5px;height:2.4px;background:#7b7b7b"></div><div class="a" style="left:1817px;top:120.39999999999999px;width:20.5px;height:2.4px;background:#b0614f"></div><div class="a" style="left:1837.8px;top:120.39999999999999px;width:1.5px;height:2.4px;background:#7b7b7b"></div><div class="a" style="left:1783px;top:124.7px;width:7.5px;height:2.4px;background:#8aa5c5"></div><div class="a" style="left:1794px;top:124.7px;width:6px;height:2.4px;background:#5aa0e8"></div><div class="a" style="left:1800px;top:124.7px;width:13px;height:2.4px;background:#6fa0d0"></div><div class="a" style="left:1826px;top:124.7px;width:9px;height:2.4px;background:#8fb5e0"></div><div class="a" style="left:1783px;top:132.0px;width:7.5px;height:2.4px;background:#7b7b7b"></div><div class="a" style="left:1791px;top:132.0px;width:10px;height:2.4px;background:#3f8c80"></div><div class="a" style="left:1803px;top:132.0px;width:7px;height:2.4px;background:#7b7b7b"></div><div class="a" style="left:1811.5px;top:132.0px;width:1px;height:2.4px;background:#7b7b7b"></div><div class="a" style="left:1785.5px;top:135.60000000000002px;width:7px;height:2.4px;background:#7b7b7b"></div><div class="a" style="left:1794px;top:135.60000000000002px;width:1.5px;height:2.4px;background:#7b7b7b"></div><div class="a" style="left:1788px;top:139.4px;width:7.5px;height:2.4px;background:#3f8c80"></div><div class="a" style="left:1798px;top:139.4px;width:9.5px;height:2.4px;background:#6f9bb8"></div><div class="a" style="left:1791px;top:143.8px;width:6px;height:2.4px;background:#5aa0e8"></div><div class="a" style="left:1797px;top:143.8px;width:10px;height:2.4px;background:#6fa0d0"></div><div class="a" style="left:1793.5px;top:147.10000000000002px;width:12px;height:2.4px;background:#3f8c80"></div><div class="a" style="left:1808px;top:147.10000000000002px;width:2px;height:2.4px;background:#7b7b7b"></div><div class="a" style="left:1791px;top:151.60000000000002px;width:3px;height:2.4px;background:#7b7b7b"></div><div class="a" style="left:1793px;top:151.60000000000002px;width:6px;height:2.4px;background:#5aa0e8"></div><div class="a" style="left:1799px;top:151.60000000000002px;width:9px;height:2.4px;background:#6fa0d0"></div><div class="a" style="left:1788.5px;top:154.8px;width:1.5px;height:2.4px;background:#7b7b7b"></div><div class="a" style="left:1790px;top:154.8px;width:8px;height:2.4px;background:#3f8c80"></div><div class="a" style="left:1785.5px;top:158.5px;width:2.5px;height:2.4px;background:#7b7b7b"></div><div class="a" style="left:1783px;top:162.3px;width:1.2px;height:2.4px;background:#7b7b7b"></div><div class="a" style="left:1841px;top:117px;width:18px;height:900px;background:#1f1f1f;border-left:1px solid #2a2a2a;"></div><div class="a" style="left:1841.4px;top:117px;width:17.6px;height:626px;background:#424242;"></div><div class="a" style="left:1853px;top:169.4px;width:6px;height:18.5px;background:#4d8fd6;"></div><div class="a" style="left:1853px;top:277.8px;width:6px;height:19.2px;background:#4d8fd6;"></div><div class="a" style="left:1853px;top:315.2px;width:6px;height:19.1px;background:#4d8fd6;"></div><div class="a" style="left:1842px;top:388px;width:17px;height:2px;background:#a0a0a0;"></div><div class="a" style="left:1327.5px;top:1003.5px;width:396.5px;height:13.5px;background:#424242;"></div><div class="a" style="left:1859px;top:44px;width:61px;height:974px;background:#181818;"></div><div class="a" style="left:1859px;top:44px;width:1px;height:974px;background:#2b2b2b;"></div><svg class="a" style="left:0;top:0;" width="1920" height="1046"><g stroke="#cccccc" stroke-width="1.4" fill="none" stroke-linecap="round" stroke-linejoin="round"><g stroke="#868686" stroke-width="1.6" fill="none" stroke-linecap="round" stroke-linejoin="round"><path d="M1883.2,67.5H1878.6C1877,67.5 1876.2,68.3 1876.2,69.9V86.6C1876.2,88.2 1877,89 1878.6,89H1889.4C1891,89 1891.8,88.2 1891.8,86.6V81.5"/><path d="M1885.6,59.6H1895.2L1901.4,65.8V78.6C1901.4,80.2 1900.6,81 1899,81H1885.6C1884,81 1883.2,80.2 1883.2,78.6V62C1883.2,60.4 1884,59.6 1885.6,59.6Z"/><path d="M1894.8,59.8V66.2H1901.2"/><path d="M1885,134V121.6L1904,133.4L1892,141"/><ellipse cx="1882" cy="143.3" rx="4.3" ry="7"/><path d="M1877.8,141.4H1886.2M1875.1,138.4L1877.7,140.5M1888.9,138.4L1886.3,140.5M1874.3,144.3H1877.6M1886.4,144.3H1889.6M1874.9,150.2L1877.7,147.7M1889,150.2L1886.3,147.7"/><circle cx="1893.6" cy="192.2" r="9.4"/><path d="M1886.8,199L1876.8,210.8"/><rect x="1875.6" y="249.4" width="11" height="22.4" rx="1.6"/><path d="M1875.6,260.6H1897.6V270.2C1897.6,271.2 1897,271.8 1896,271.8H1886.6"/><rect x="1892.6" y="243.4" width="11" height="11" rx="1.6"/><path d="M1882.2,306.4H1896.6M1884.8,306.4V315.4L1878.4,328.4C1877.9,329.6 1878.5,330.8 1879.8,330.8H1899C1900.3,330.8 1900.9,329.6 1900.4,328.4L1894,315.4V306.4M1881.6,322.2H1897.2"/><rect x="1875.6" y="366.2" width="12.2" height="12" rx="1.6"/><rect x="1891" y="381.4" width="12.2" height="12" rx="1.6"/><path d="M1881.7,378.2V385.2C1881.7,386.6 1882.6,387.4 1884,387.4H1891"/><circle cx="1889.6" cy="926.6" r="14.8"/><circle cx="1889.6" cy="921.6" r="5.6"/><path d="M1879.4,937.2C1881.6,932.2 1885,930.4 1889.6,930.4C1894.2,930.4 1897.6,932.2 1899.8,937.2"/><polygon points="1899.6,984.3 1904.0,984.9 1904.0,989.5 1899.6,990.1 1898.7,992.2 1901.4,995.8 1898.2,999.0 1894.6,996.3 1892.5,997.2 1891.9,1001.6 1887.3,1001.6 1886.7,997.2 1884.6,996.3 1881.0,999.0 1877.8,995.8 1880.5,992.2 1879.6,990.1 1875.2,989.5 1875.2,984.9 1879.6,984.3 1880.5,982.2 1877.8,978.6 1881.0,975.4 1884.6,978.1 1886.7,977.2 1887.3,972.8 1891.9,972.8 1892.5,977.2 1894.6,978.1 1898.2,975.4 1901.4,978.6 1898.7,982.2"/><circle cx="1889.6" cy="987.2" r="4"/></g><circle cx="1899.7" cy="267.6" r="10.4" fill="#0078d4" stroke="#181818" stroke-width="1"/></g></svg><div class="a " style="left:1896.0px;top:261.4px;font-size:12.5px;line-height:12.5px;color:#ffffff;font-weight:bold;">1</div><div class="a" style="left:0px;top:1018px;width:1920px;height:28px;background:#181818;"></div><div class="a" style="left:0px;top:1018px;width:1920px;height:1px;background:#2b2b2b;"></div><div class="a" style="left:0px;top:1019px;width:43.2px;height:27px;background:#0078d4;"></div><svg class="a" style="left:0;top:0;" width="1920" height="1046"><g stroke="#cccccc" stroke-width="1.4" fill="none" stroke-linecap="round" stroke-linejoin="round"><g stroke="#cccccc" stroke-width="1.3" fill="none" stroke-linecap="round" stroke-linejoin="round"><path d="M15.8,1030.2L21.4,1034.6L15.8,1039M26.7,1025.2L21.2,1029.4L26.7,1033.6" stroke="#ffffff"/><circle cx="55.4" cy="1025.8" r="2.4"/><circle cx="55.4" cy="1038.4" r="2.4"/><circle cx="64.2" cy="1029.4" r="2.4"/><path d="M55.4,1028.2V1036M64.2,1031.8C64.2,1035 61,1035.8 55.6,1036"/><path d="M241.8,1036.6H240.8C239,1036.6 238,1035.3 238,1033.7C238,1032 239.3,1030.8 240.8,1030.8C241.1,1028.3 243.4,1026.4 246.1,1026.4C248.8,1026.4 251,1028.3 251.3,1030.8C252.9,1030.8 254.2,1032 254.2,1033.7C254.2,1035.3 253.1,1036.6 251.4,1036.6H250.4M246.1,1038.8V1031.6M243.6,1034L246.1,1031.5L248.6,1034"/><circle cx="276.6" cy="1027" r="2.2"/><circle cx="276.6" cy="1037.4" r="2.2"/><circle cx="285.6" cy="1031.6" r="2.2"/><path d="M276.6,1029.2V1035.2M281.3,1024.8V1040.6M285.6,1033.8C285.6,1037 284,1038.2 281.4,1038.2"/><path d="M327.6,1024.8C322.8,1025.4 318.8,1028.8 316.6,1032.6L320,1036C323.8,1033.8 327.2,1029.8 327.6,1024.8Z"/><path d="M316.6,1032.6L313.6,1031.8L316.2,1029L319.6,1028.8M320,1036L320.8,1039.2L323.6,1036.4L323.6,1033.2M313,1036.4V1039.4H316"/><circle cx="322.8" cy="1029.6" r="1.1" fill="#cccccc"/><path d="M330.6,1039.6L332.4,1037.8M335.8,1030.6L331.6,1034.8C330.8,1035.6 331,1036.8 332,1037.6C332.8,1038.4 334,1038.6 334.8,1037.8L339,1033.6ZM333.6,1032.8L335.2,1031.2M336.8,1036L338.4,1034.4M337.6,1029L343.2,1034.6L345,1032.8C346.2,1031.6 346,1029.8 344.8,1028.6L342,1025.8C340.8,1024.6 339,1024.4 337.8,1025.6L336,1027.4ZM344.2,1026.4L346.2,1024.4"/><circle cx="459.2" cy="1032.4" r="7.2"/><path d="M456.4,1029.6L462,1035.2M462,1029.6L456.4,1035.2"/><path d="M495,1025.2L502.6,1039.2H487.4Z"/><path d="M495,1030V1034.4"/><circle cx="495" cy="1036.6" r="0.4"/><circle cx="530.8" cy="1032.4" r="7.2"/><path d="M530.8,1031V1036"/><circle cx="530.8" cy="1028.6" r="0.4"/><path d="M580.8,1033V1026.4L590.3,1032.6L584,1036.4"/><ellipse cx="578.6" cy="1036.8" rx="2.9" ry="3.6"/><path d="M575.8,1035.4H581.4M574,1033.4L575.8,1034.6M583.2,1033.4L581.4,1034.6M573.8,1037H575.6M581.6,1037H583.4M574,1040.6L575.8,1039.2M583.2,1040.6L581.4,1039.2"/><g stroke-width="1.5"><rect x="1750.6" y="1024.6" width="6.6" height="6.8" rx="3"/><rect x="1757.2" y="1024.6" width="6.6" height="6.8" rx="3"/><path d="M1750.8,1030.8C1748.4,1032 1749,1039.6 1757.2,1039.6C1765.4,1039.6 1766,1032 1763.6,1030.8"/><path d="M1755.4,1033.6V1036.4M1759,1033.6V1036.4"/></g><path d="M1603,1027.9C1601.2,1027.9 1600.6,1028.6 1600.6,1030V1031.6C1600.6,1032.4 1600,1032.8 1598.6,1032.8C1600,1032.8 1600.6,1033.2 1600.6,1034V1035.6C1600.6,1037 1601.2,1037.7 1603,1037.7M1607,1027.9C1608.8,1027.9 1609.4,1028.6 1609.4,1030V1031.6C1609.4,1032.4 1610,1032.8 1611.4,1032.8C1610,1032.8 1609.4,1033.2 1609.4,1034V1035.6C1609.4,1037 1608.8,1037.7 1607,1037.7" stroke-width="1.1"/><path d="M1788,1033.4L1791,1036.8L1798.4,1027.4M1795,1036.2L1796,1036.8L1804.6,1026.8"/><path d="M1886,1037.6H1898.2C1896.8,1036.4 1896.2,1034.8 1896.2,1033V1030.4C1896.2,1027.4 1894.2,1025 1892.1,1025C1890,1025 1888,1027.4 1888,1030.4V1033C1888,1034.8 1887.4,1036.4 1886,1037.6Z"/><path d="M1890.4,1039.6C1890.8,1040.6 1891.4,1041 1892.1,1041C1892.8,1041 1893.4,1040.6 1893.8,1039.6"/></g></g></svg><div class="a " style="left:73.3px;top:1025.3px;font-size:15px;line-height:15px;color:#cccccc;letter-spacing:0.85px;">docs/point-and-click*</div><div class="a " style="left:351.7px;top:1025.3px;font-size:15px;line-height:15px;color:#cccccc;letter-spacing:0.5px;">Launchpad</div><div class="a " style="left:473.3px;top:1025.3px;font-size:15px;line-height:15px;color:#cccccc;letter-spacing:0.5px;">0</div><div class="a " style="left:509.0px;top:1025.3px;font-size:15px;line-height:15px;color:#cccccc;letter-spacing:0.5px;">0</div><div class="a " style="left:545.8px;top:1025.3px;font-size:15px;line-height:15px;color:#cccccc;letter-spacing:0.5px;">3</div><div class="a " style="left:597.2px;top:1025.3px;font-size:15px;line-height:15px;color:#cccccc;letter-spacing:0.5px;">Run Triplex for VS Code (triplex-monorepo)</div><div class="a " style="left:1295.0px;top:1025.3px;font-size:15px;line-height:15px;color:#cccccc;letter-spacing:0.5px;">Ln 14, Col 1</div><div class="a " style="left:1403.0px;top:1025.3px;font-size:15px;line-height:15px;color:#cccccc;letter-spacing:0.5px;">Spaces: 2</div><div class="a " style="left:1494.0px;top:1025.3px;font-size:15px;line-height:15px;color:#cccccc;letter-spacing:0.85px;">UTF-8</div><div class="a " style="left:1561.0px;top:1025.3px;font-size:15px;line-height:15px;color:#cccccc;letter-spacing:0.1px;">LF</div><div class="a " style="left:1621.5px;top:1025.3px;font-size:15px;line-height:15px;color:#cccccc;letter-spacing:0.5px;">TypeScript JSX</div><div class="a " style="left:1810.0px;top:1025.3px;font-size:15px;line-height:15px;color:#cccccc;letter-spacing:0.5px;">Prettier</div></div></body></html>
